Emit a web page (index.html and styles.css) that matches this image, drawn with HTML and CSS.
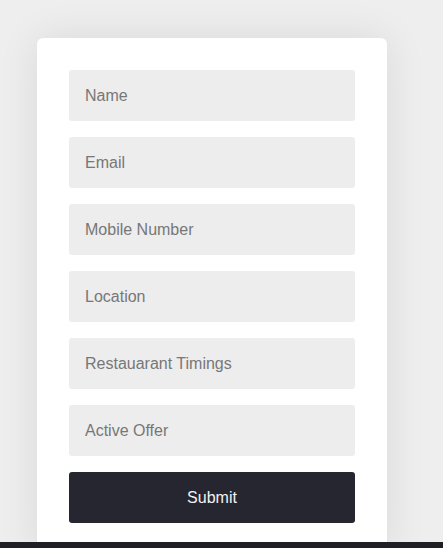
FILE: index.html
```html
<!DOCTYPE html>
<html>
<head>
    <title>Restaurant Details</title>
    <link rel="stylesheet" href="styles.css">
</head>
<body>
    <div class="page">
        <div class="container">
            <form id="restaurantForm">
                <div class="form-group">
                    <input type="text" id="name" name="name" placeholder="Name">
                </div>
                <div class="form-group">
                    <input type="email" id="email" name="email" placeholder="Email">
                </div>
                <div class="form-group">
                    <input type="tel" id="mobile" name="mobile" placeholder="Mobile Number">
                </div>
                <div class="form-group">
                    <input type="text" id="location" name="location" placeholder="Location">
                </div>
                <div class="form-group">
                    <input type="text" id="timings" name="timings" placeholder="Restauarant Timings">
                </div>
                <div class="form-group">
                    <input type="text" id="offer" name="offer" placeholder="Active Offer">
                </div>
                <button type="submit">Submit</button>
            </form>
        </div>
    </div>
    <div class="footer"></div>
</body>
</html>
```

FILE: styles.css
```css
body {
    font-family: 'Liberation Sans', Arial, Helvetica, sans-serif;
    background-color: #eeeeee;
    margin: 0;
}

.page {
    height: 542px;
    overflow: hidden;
    padding: 38px 0 0 37px;
    box-sizing: border-box;
}

.container {
    background-color: #fff;
    padding: 32px;
    border-radius: 6px;
    box-shadow: 0 0 40px rgba(0, 0, 0, 0.09);
    width: 350px;
    box-sizing: border-box;
}

.form-group {
    margin-bottom: 16px;
}

input[type="text"],
input[type="email"],
input[type="tel"] {
    display: block;
    width: 100%;
    height: 51px;
    box-sizing: border-box;
    padding: 0 16px;
    border: none;
    border-radius: 3px;
    background-color: #ededed;
    font-family: inherit;
    font-size: 16px;
    color: #333;
    outline: none;
}

input::placeholder {
    color: #777;
    opacity: 1;
}

button[type="submit"] {
    display: block;
    width: 100%;
    height: 51px;
    background-color: #262631;
    color: #f2f2f2;
    border: none;
    border-radius: 3px;
    cursor: pointer;
    font-family: inherit;
    font-size: 16px;
}

.footer {
    height: 6px;
    background-color: #1f1f24;
}
```
